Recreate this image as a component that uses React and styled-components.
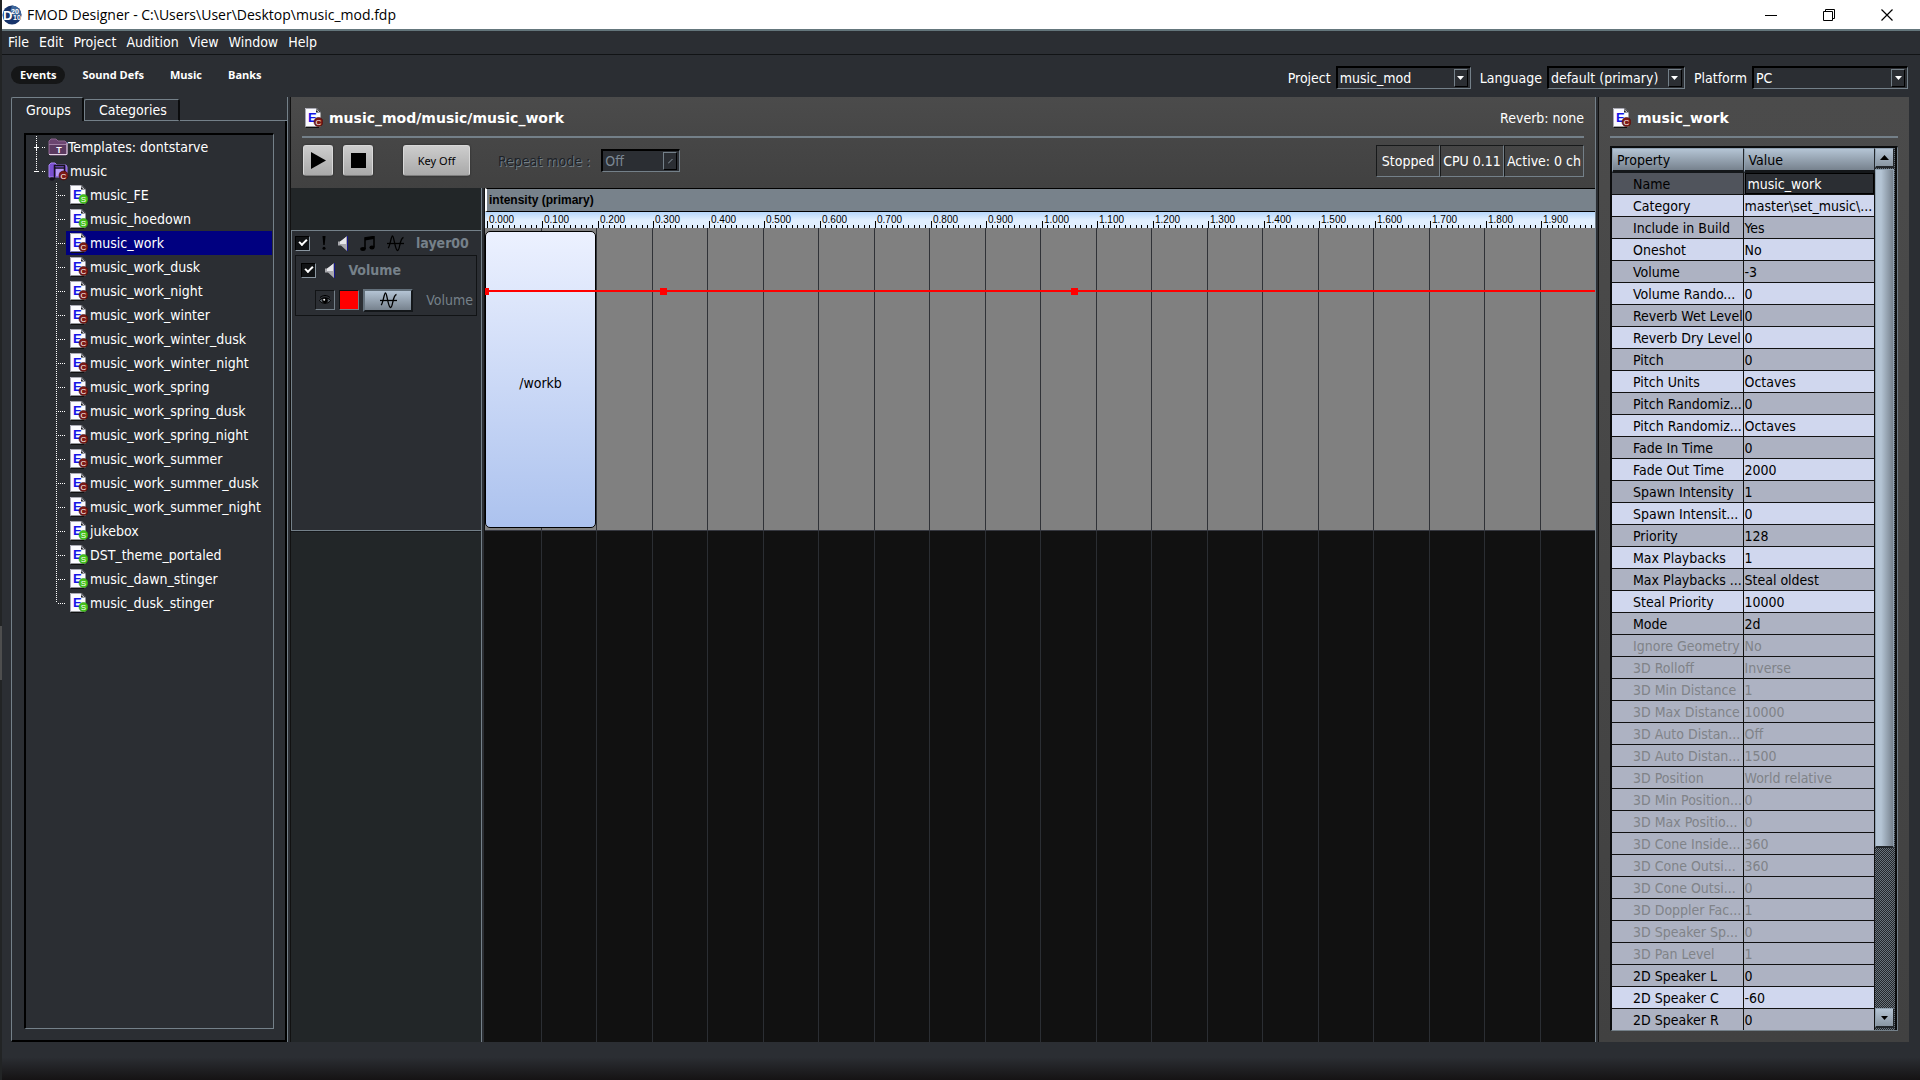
import React from "react";
import styled, { createGlobalStyle, css } from "styled-components";

const ui = `"DejaVu Sans Condensed", "DejaVu Sans", "Noto Sans", sans-serif`;

const Global = createGlobalStyle`
  *, *::before, *::after { box-sizing: border-box; }
  html, body, #root { height: 100%; }
  body { margin: 0; overflow: hidden; background: #2b2e33; color: #fff; font: 14px/20px ${ui}; }
  button, input, select { font: inherit; color: inherit; margin: 0; }
  svg { display: block; flex: none; }
`;

const Screen = styled.div`
  height: 100vh;
  display: flex;
`;
const DesktopEdge = styled.div`
  flex: none;
  width: 2px;
  background: linear-gradient(#222425 58%, #4e4e4e 58%, #4e4e4e 63%, #222425 63%);
`;
const Window = styled.div`
  flex: 1;
  min-width: 0;
  display: flex;
  flex-direction: column;
  background: #2b2e33;
`;

/* title bar */
const TitleBar = styled.header`
  flex: none;
  height: 31px;
  display: flex;
  align-items: center;
  padding-right: 4px;
  background: #fff;
  color: #000;
  border-bottom: 2px solid #64767c;
`;
const Title = styled.h1`
  flex: 1;
  margin: 0 0 0 5px;
  font: 400 14px/20px "Open Sans", "Noto Sans", sans-serif;
`;
const WindowButtons = styled.div`
  display: flex;
`;
const WindowButton = styled.button`
  width: 58px;
  height: 28px;
  display: flex;
  align-items: center;
  justify-content: center;
  border: 0;
  padding: 0;
  background: none;
`;

/* menus and tool bar */
const MenuBar = styled.nav`
  flex: none;
  height: 24px;
  display: flex;
  align-items: center;
  gap: 10px;
  padding: 0 6px 2px;
  border-bottom: 1px solid #111315;
`;
const PlainButton = styled.button`
  border: 0;
  padding: 0;
  background: none;
  line-height: 20px;
`;
const ToolBar = styled.div`
  flex: none;
  height: 42px;
  display: flex;
  justify-content: space-between;
  padding: 11px 12px 0 9px;
`;
const Modes = styled.nav`
  display: flex;
  align-items: flex-start;
  gap: 8px;
`;
const Mode = styled.button`
  height: 18px;
  margin: 0;
  padding: 0 9px;
  border: 0;
  border-radius: 9px;
  background: ${(p) => (p.$on ? "#151617" : "transparent")};
  font: 700 11px/16px "Open Sans", "Noto Sans", sans-serif;
`;
const Pickers = styled.div`
  display: flex;
  align-items: flex-start;
  gap: 9px;
`;
const Picker = styled.label`
  display: flex;
  align-items: center;
  gap: 5px;
  color: ${(p) => (p.$off ? "#1d2227" : "#fff")};
  ${(p) => p.$off && css`
    gap: 11px;
    text-shadow: 1px 1px 0 #74808a;
  `}
`;
const SelectBox = styled.span`
  position: relative;
  display: flex;
  width: ${(p) => p.$w}px;
  height: 23px;
  border: 2px solid #000;
  border-right: 1px solid #748089;
  border-bottom: 1px solid #748089;
`;
const Select = styled.select`
  appearance: none;
  flex: 1;
  width: 100%;
  padding: 0 20px 0 2px;
  border: 0;
  background: #2b2e33;
  color: ${(p) => (p.disabled ? "#7c8893" : "#fff")};
  opacity: 1;
`;
const SelectArrow = styled.span`
  position: absolute;
  top: 1px;
  right: 2px;
  width: 14px;
  height: 18px;
  display: flex;
  align-items: center;
  justify-content: center;
  border: 1px solid #748089;
  border-right-color: #000;
  border-bottom-color: #000;
  background: #2b2e33;
  pointer-events: none;
`;

/* main area */
const Main = styled.main`
  flex: 1;
  min-height: 0;
  display: flex;
  padding: 0 11px 0 9px;
`;
const Footer = styled.footer`
  flex: none;
  height: 38px;
  background: linear-gradient(#2b2e33 40%, #151314);
`;
const Splitter = styled.div`
  flex: none;
  width: 4px;
  background: #2b2e33;
  border-left: 1px solid #748089;
  border-right: 1px solid #111;
`;

const Sidebar = styled.section`
  flex: none;
  width: 276px;
  display: flex;
  flex-direction: column;
`;
const Tabs = styled.div`
  display: flex;
  align-items: flex-end;
  height: 24px;
`;
const Tab = styled.button`
  height: ${(p) => (p.$on ? 24 : 22)}px;
  padding: 0 11px 0 14px;
  border: 1px solid #748089;
  border-right: 2px solid #0b0c0d;
  border-bottom: ${(p) => (p.$on ? "0" : "1px solid #748089")};
  border-radius: 2px 2px 0 0;
  background: #2b2e33;
  line-height: 20px;
`;
const TabsRest = styled.div`
  flex: 1;
  border-bottom: 1px solid #748089;
`;
const TabPanel = styled.div`
  flex: 1;
  min-height: 0;
  display: flex;
  padding: 12px 11px 11px 12px;
  border: 1px solid #748089;
  border-top: 0;
  border-right: 2px solid #000;
  border-bottom: 2px solid #000;
`;
const Tree = styled.ul`
  flex: 1;
  margin: 0;
  padding: 0 1px 0 0;
  list-style: none;
  border: 2px solid #000;
  border-right: 1px solid #748089;
  border-bottom: 1px solid #748089;
`;
const TreeItem = styled.li`
  height: 24px;
  display: flex;
`;
const TreeLines = styled.svg`
  width: ${(p) => p.$w}px;
  height: 24px;
`;
const TreeButton = styled.button`
  flex: 1;
  display: flex;
  align-items: center;
  gap: ${(p) => p.$gap}px;
  padding: 0 0 0 ${(p) => p.$pad}px;
  border: 0;
  background: ${(p) => (p.$on ? "#000080" : "none")};
  line-height: 20px;
  white-space: nowrap;
`;

const Editor = styled.section`
  flex: 1;
  min-width: 0;
  display: flex;
  flex-direction: column;
  background: #222628;
`;
const EditorHead = styled.div`
  flex: none;
  height: 91px;
  padding: 0 11px;
  background: linear-gradient(#4b4b4b, #414141);
`;
const TitleLine = styled.div`
  height: 41px;
  display: flex;
  align-items: center;
  gap: 6px;
  padding: 3px 0 0 3px;
  border-bottom: 2px solid #0d0e0f;
  border-image: linear-gradient(#0d0e0f 50%, #748089 50%) 0 0 2 0;
`;
const PanelTitle = styled.h2`
  flex: 1;
  margin: 0;
  font: 700 14px/20px "DejaVu Sans", sans-serif;
`;
const Transport = styled.div`
  display: flex;
  align-items: flex-start;
  padding: 7px 0 0 1px;
`;
const PushButton = styled.button`
  width: ${(p) => p.$w}px;
  height: 31px;
  display: flex;
  align-items: center;
  justify-content: center;
  margin-right: ${(p) => p.$after}px;
  border: 1px solid #d8d8d8;
  border-bottom-color: #7d7d7d;
  border-radius: 3px;
  padding: 0;
  background: linear-gradient(#cdcdcd, #a9a9a9);
  box-shadow: 0 0 2px #222;
  color: #000;
  font: 11px/16px "Noto Sans", sans-serif;
`;
const RepeatSlot = styled.div`
  flex: 1;
  padding-top: 4px;
`;
const Status = styled.div`
  display: flex;
  height: 32px;
`;
const StatusCell = styled.span`
  display: flex;
  align-items: center;
  justify-content: center;
  width: ${(p) => p.$w}px;
  white-space: nowrap;
  border: 1px solid #17191a;
  border-right-color: #748089;
  border-bottom-color: #748089;
`;

const Arrange = styled.div`
  flex: 1;
  min-height: 0;
  display: flex;
`;
const LayerColumn = styled.div`
  flex: none;
  width: 190px;
  padding-top: 42px;
`;
const Layer = styled.div`
  height: 301px;
  padding: 0 4px 0 3px;
  background: #2b2e33;
  border: 1px solid #748089;
  border-right: 0;
  box-shadow: 0 1px 0 #15171a;
`;
const LayerHead = styled.div`
  height: 24px;
  display: flex;
  align-items: center;
  gap: 12px;
`;
const LayerName = styled.strong`
  color: #76818a;
`;
const Check = styled.input`
  appearance: none;
  flex: none;
  width: 15px;
  height: 15px;
  background: #101214;
  border: 1px solid #000;
  border-right-color: #8a96a0;
  border-bottom-color: #8a96a0;
  display: grid;
  place-items: center;
  &:checked::before {
    content: "";
    width: 8px;
    height: 5px;
    margin-top: -3px;
    border-left: 2px solid #fff;
    border-bottom: 2px solid #fff;
    transform: rotate(-45deg);
  }
`;
const Effect = styled.div`
  height: 61px;
  border: 1px solid #111315;
  padding: 4px 3px 0 5px;
`;
const EffectRow = styled.div`
  display: flex;
  align-items: center;
  gap: ${(p) => p.$gap}px;
  height: ${(p) => p.$h}px;
  padding-left: ${(p) => p.$in}px;
`;
const SmallButton = styled.button`
  flex: none;
  width: 20px;
  height: 20px;
  padding: 0;
  display: grid;
  place-items: center;
  border: 1px solid #111315;
  border-right-color: #748089;
  border-bottom-color: #748089;
  background: ${(p) => p.$bg};
`;
const CurveButton = styled.button`
  flex: none;
  width: 50px;
  height: 23px;
  padding: 0;
  display: grid;
  place-items: center;
  border: 2px solid #64717c;
  border-right-color: #14171a;
  border-bottom-color: #14171a;
  background: linear-gradient(#b4c4d4, #77828e);
`;
const EffectValue = styled.span`
  flex: 1;
  text-align: right;
  color: #76818a;
`;

const Timeline = styled.div`
  flex: 1;
  min-width: 0;
  display: flex;
  flex-direction: column;
  background: #111;
  overflow: hidden;
`;
const ParamBar = styled.div`
  flex: none;
  height: 24px;
  padding: 0 2px;
  border-top: 1px solid #000;
  border-bottom: 1px solid #000;
  border-left: 2px solid #fff;
  background: #78828b;
  color: #000;
  font: 700 12px/22px "Liberation Sans", Arial, sans-serif;
`;
const RulerArt = styled.svg`
  width: 100%;
  height: 16px;
  background: linear-gradient(#b7d7fb, #e1effe 50%);
  text { font: 10px "Liberation Sans", Arial, sans-serif; fill: #000; }
`;
const Lane = styled.div`
  position: relative;
  flex: ${(p) => (p.$empty ? "1" : "none")};
  height: ${(p) => (p.$empty ? "auto" : "303px")};
  min-height: 0;
  background: ${(p) => (p.$empty ? "#111" : "#808080")};
  border-bottom: ${(p) => (p.$empty ? "0" : "1px solid #35373f")};
`;
const Overlay = styled.svg`
  position: absolute;
  inset: 0;
  width: 100%;
  height: 100%;
`;
const Clip = styled.button`
  position: absolute;
  left: 0;
  top: 3px;
  width: 111px;
  height: 297px;
  border: 1px solid #000;
  border-radius: 5px;
  background: linear-gradient(#ecf1ff, #acc2ee);
  color: #000;
  padding: 6px 0 0;
`;

/* property panel */
const Properties = styled.aside`
  flex: none;
  width: 310px;
  display: flex;
  flex-direction: column;
  padding: 0 11px 11px;
  background: linear-gradient(#4b4b4b, #414141);
`;
const Grid = styled.div`
  flex: 1;
  min-height: 0;
  display: flex;
  margin-top: 8px;
  border: 2px solid #0b0c0d;
  border-right-color: #748089;
  border-right-width: 1px;
  border-bottom: 1px solid #748089;
  background: #0b0c0d;
`;
const TableClip = styled.div`
  flex: 1;
  min-width: 0;
  overflow: hidden;
`;
const Table = styled.table`
  width: 100%;
  table-layout: fixed;
  border-collapse: separate;
  border-spacing: 0;
  color: #000;
`;
const Th = styled.th`
  width: ${(p) => p.$w || "auto"};
  height: 25px;
  padding: 0 4px;
  text-align: left;
  font-weight: 400;
  line-height: 20px;
  border: 1px solid #8fa0b0;
  border-right: 1px solid #23272b;
  border-bottom: 3px solid #14171a;
  background: linear-gradient(#b4c4d4, #77828e);
`;
const Cell = styled.td`
  height: 22px;
  padding: 0 0 0 ${(p) => (p.$label ? 21 : 1)}px;
  overflow: hidden;
  white-space: nowrap;
  text-align: left;
  font-weight: 400;
  line-height: 20px;
  border-right: 1px solid #111;
  border-bottom: 1px solid #111;
  color: ${(p) => (p.$off ? "#808388" : "#000")};
  background: ${(p) => (p.$tone === "sel" ? "#50545c" : p.$tone === "light" ? "#d0d7ee" : "#adb2c2")};
`;
const NameInput = styled.input`
  display: block;
  width: 100%;
  height: 21px;
  padding: 0 2px;
  border: 1px solid #000;
  outline: 0;
  background: #2b2e33;
  color: #fff;
`;
const ScrollTrack = styled.div`
  flex: none;
  width: 22px;
  display: flex;
  flex-direction: column;
  padding: 0 1px 2px 0;
  background: repeating-conic-gradient(#69737c 0 25%, #23272b 0 50%) 0 0 / 2px 2px;
  border-right: 2px solid #0b0c0d;
`;
const ScrollButton = styled.button`
  flex: none;
  height: 20px;
  padding: 0;
  display: grid;
  place-items: center;
  border: 1px solid #8fa0b0;
  border-right-color: #23272b;
  border-bottom: 2px solid #23272b;
  background: linear-gradient(#b4c4d4, #8a96a2);
`;
const Thumb = styled.div`
  flex: 679;
  margin-top: 1px;
  border: 1px solid #8fa0b0;
  border-bottom: 2px solid #23272b;
  background: linear-gradient(90deg, #b4c4d4 30%, #77828e);
`;
const TrackRest = styled.div`
  flex: 161;
`;

/* drawings */
const AppIcon = () => (
  <svg width="20" height="20" viewBox="0 0 20 20">
    <circle cx="10" cy="10" r="9.5" fill="#17346b" />
    <path d="M10 .6a9.4 9.4 0 0 1 9.4 9.4L13 12 8 7z" fill="#3d679c" />
    <text x="1" y="15" fontFamily="Liberation Sans" fontWeight="700" fontSize="13" fill="#fff">D</text>
    <text x="9" y="9" fontFamily="Liberation Sans" fontWeight="700" fontSize="7" fill="#fff">20</text>
    <text x="11" y="15" fontFamily="Liberation Sans" fontWeight="700" fontSize="7" fill="#fff">10</text>
  </svg>
);
const Badge = ({ kind, x, y }) => (
  <g>
    <circle cx={x} cy={y} r="4.5" fill={kind === "C" ? "#7d1a16" : "#45c21b"} stroke={kind === "C" ? "#3c0b0a" : "#2a9a10"} strokeWidth=".6" />
    <text x={x} y={y + 3} textAnchor="middle" fontFamily="Liberation Sans" fontSize="8" fill="#fff">{kind}</text>
  </g>
);
const EventIcon = ({ kind }) => (
  <svg width="18" height="20" viewBox="0 0 18 20">
    <path d="M1 19.500h13" fill="none" stroke="#111" />
    <path d="M0 0h11.500l4 4v14.500H0z" fill="#fbfbff" />
    <path d="M.5 18.500V.5H11" fill="none" stroke="#a9a9b4" />
    <path d="M11 0v4.500h4.500V4z" fill="#1d1f24" />
    <path d="M11 1.500l3.500 3" stroke="#d9d9e0" />
    <text x="3" y="14" fontFamily="Liberation Sans" fontWeight="700" fontSize="13" fill="#1414e6">E</text>
    <Badge kind={kind} x={13.5} y={14} />
  </svg>
);
const TemplateIcon = () => (
  <svg width="20" height="18" viewBox="0 0 20 18">
    <path d="M1 3l2-2h5l2 2h7l2 2v11l-1 1H2l-1-1z" fill="#6b4570" stroke="#8a648e" />
    <path d="M1 6h17v1H1z" fill="#a07fa3" />
    <path d="M2 7h16v9H2z" fill="#5b3a60" />
    <path d="M1 16.500h18V5" fill="none" stroke="#e3d3e4" />
    <text x="11" y="15" textAnchor="middle" fontFamily="Liberation Sans" fontWeight="700" fontSize="9" fill="#fff">T</text>
  </svg>
);
const GroupIcon = () => (
  <svg width="21" height="19" viewBox="0 0 21 19">
    <path d="M1 3l2-2h4l2 2h9l1 2v10H1z" fill="#7a4fd0" stroke="#a685ef" />
    <path d="M8 5h9v9H8z" fill="#b99bf5" />
    <path d="M6.500 17V3.500h10V12M6.500 6h10" fill="none" stroke="#161020" strokeWidth="1.500" />
    <ellipse cx="4" cy="17" rx="2.600" ry="1.700" fill="#161020" />
    <Badge kind="C" x={15.5} y={13.5} />
  </svg>
);
const Down = ({ fill = "#fff" }) => (
  <svg width="7" height="4" viewBox="0 0 7 4"><path d="M0 0h7L3.500 4z" fill={fill} /></svg>
);
const Up = () => (
  <svg width="9" height="5" viewBox="0 0 9 5"><path d="M0 5h9L4.500 0z" fill="#000" /></svg>
);
const Speaker = () => (
  <svg width="10" height="15" viewBox="0 0 10 15">
    <path d="M0 5.500h3L9 0v15L3 9.500H0z" fill="#a9a9ae" />
    <path d="M2 5.500L8 1v7L2 8z" fill="#e6e6ea" />
    <path d="M9.500 0v15" stroke="#16168c" />
  </svg>
);
const Curve = () => (
  <svg width="17" height="17" viewBox="0 0 17 17" fill="none" stroke="#000" strokeWidth="1.300">
    <path d="M0 8.500h17" />
    <path d="M1 13C3 12 4 1 5.500 1S8 15 10.500 15.500 12.500 3 16.500 2.500" />
  </svg>
);
const Notes = () => (
  <svg width="15" height="15" viewBox="0 0 15 15">
    <path d="M5 13V2l9-1.500V11" fill="none" stroke="#000" strokeWidth="1.500" />
    <path d="M5 2l9-1.500v2.500L5 4.500z" />
    <ellipse cx="3" cy="13" rx="2.800" ry="1.900" /><ellipse cx="12" cy="11.500" rx="2.600" ry="1.900" />
  </svg>
);
const Bang = () => (
  <svg width="4" height="14" viewBox="0 0 4 14"><path d="M.5 0h3L2.700 9H1.300z" /><circle cx="2" cy="12.300" r="1.500" /></svg>
);
const Eye = () => (
  <svg width="12" height="12" viewBox="0 0 12 12">
    <path d="M1 3.500C4 .8 8 .8 11 3.500" fill="none" stroke="#000" />
    <path d="M.5 6.500C3 3 9 3 11.500 6.500 9 10.300 3 10.300 .5 6.500z" fill="#5d646b" stroke="#000" />
    <circle cx="6" cy="6.500" r="2.800" /><circle cx="5.200" cy="5.700" r="1" fill="#fff" />
  </svg>
);

/* data */
const events = [
  ["music_FE", "S"], ["music_hoedown", "S"], ["music_work", "C"], ["music_work_dusk", "C"],
  ["music_work_night", "C"], ["music_work_winter", "C"], ["music_work_winter_dusk", "C"],
  ["music_work_winter_night", "C"], ["music_work_spring", "C"], ["music_work_spring_dusk", "C"],
  ["music_work_spring_night", "C"], ["music_work_summer", "C"], ["music_work_summer_dusk", "C"],
  ["music_work_summer_night", "C"], ["jukebox", "S"], ["DST_theme_portaled", "S"],
  ["music_dawn_stinger", "S"], ["music_dusk_stinger", "S"],
];
const props = [
  ["Category", "master\\set_music\\..."], ["Include in Build", "Yes"], ["Oneshot", "No"], ["Volume", "-3"],
  ["Volume Rando...", "0"], ["Reverb Wet Level", "0"], ["Reverb Dry Level", "0"], ["Pitch", "0"],
  ["Pitch Units", "Octaves"], ["Pitch Randomiz...", "0"], ["Pitch Randomiz...", "Octaves"],
  ["Fade In Time", "0"], ["Fade Out Time", "2000"], ["Spawn Intensity", "1"], ["Spawn Intensit...", "0"],
  ["Priority", "128"], ["Max Playbacks", "1"], ["Max Playbacks ...", "Steal oldest"],
  ["Steal Priority", "10000"], ["Mode", "2d"],
  ["Ignore Geometry", "No", 1], ["3D Rolloff", "Inverse", 1], ["3D Min Distance", "1", 1],
  ["3D Max Distance", "10000", 1], ["3D Auto Distan...", "Off", 1], ["3D Auto Distan...", "1500", 1],
  ["3D Position", "World relative", 1], ["3D Min Position...", "0", 1], ["3D Max Positio...", "0", 1],
  ["3D Cone Inside...", "360", 1], ["3D Cone Outsi...", "360", 1], ["3D Cone Outsi...", "0", 1],
  ["3D Doppler Fac...", "1", 1], ["3D Speaker Sp...", "0", 1], ["3D Pan Level", "1", 1],
  ["2D Speaker L", "0"], ["2D Speaker C", "-60"], ["2D Speaker R", "0"],
];

const PITCH = 55.5;
const majors = Array.from({ length: 20 }, (_, i) => i);
const minors = Array.from({ length: 200 }, (_, i) => i);

const GridLines = ({ color }) => (
  <Overlay>
    {majors.slice(1).map((i) => {
      const x = Math.ceil(i * PITCH) + 0.5;
      return <line key={i} x1={x} x2={x} y1="0" y2="100%" stroke={color} />;
    })}
  </Overlay>
);

const Ruler = () => (
  <RulerArt>
    {minors.map((i) => {
      const x = Math.floor(2 + (i * PITCH) / 10) + 0.5;
      return <line key={i} x1={x} x2={x} y1={i % 10 ? 13 : 9} y2="16" stroke="#000" />;
    })}
    {majors.map((i) => (
      <text key={i} x={Math.floor(4 + i * PITCH)} y="11">{(i / 10).toFixed(3)}</text>
    ))}
  </RulerArt>
);

function Dropdown({ label, value, width, disabled }) {
  return (
    <Picker $off={disabled}>
      {label}
      <SelectBox $w={width}>
        <Select disabled={disabled} defaultValue={value}><option>{value}</option></Select>
        <SelectArrow>
          {disabled ? <svg width="5" height="5"><path d="M0 4.500L4.500 0" stroke="#8a96a0" /></svg> : <Down />}
        </SelectArrow>
      </SelectBox>
    </Picker>
  );
}

const RootLines = ({ open, first }) => (
  <TreeLines $w={22} stroke="#fff" strokeDasharray="1 1">
    <path d={first ? "M10.500 1v23" : "M10.500 0v12"} />
    <path d="M16 12.500h4" />
    <path d="M8 12.500h5" strokeDasharray="none" />
    {!open && <path d="M10.500 10v5" strokeDasharray="none" />}
  </TreeLines>
);

export default function App() {
  return (
    <>
      <Global />
      <Screen>
        <DesktopEdge />
        <Window>
          <TitleBar>
            <AppIcon />
            <Title>FMOD Designer - C:\Users\User\Desktop\music_mod.fdp</Title>
            <WindowButtons>
              <WindowButton aria-label="Minimize"><svg width="12" height="12"><path d="M0 6.500h12" stroke="#000" /></svg></WindowButton>
              <WindowButton aria-label="Restore">
                <svg width="12" height="12" fill="none" stroke="#000"><path d="M.5 2.500h9v9h-9zM2.500 2.500v-2h9v9h-2" /></svg>
              </WindowButton>
              <WindowButton aria-label="Close"><svg width="12" height="12"><path d="M.5.5l11 11M11.500.5l-11 11" stroke="#000" strokeWidth="1.200" /></svg></WindowButton>
            </WindowButtons>
          </TitleBar>

          <MenuBar>
            {["File", "Edit", "Project", "Audition", "View", "Window", "Help"].map((m) => (
              <PlainButton key={m}>{m}</PlainButton>
            ))}
          </MenuBar>

          <ToolBar>
            <Modes>
              {["Events", "Sound Defs", "Music", "Banks"].map((m, i) => <Mode key={m} $on={i === 0}>{m}</Mode>)}
            </Modes>
            <Pickers>
              <Dropdown label="Project" value="music_mod" width={135} />
              <Dropdown label="Language" value="default (primary)" width={138} />
              <Dropdown label="Platform" value="PC" width={156} />
            </Pickers>
          </ToolBar>

          <Main>
            <Sidebar>
              <Tabs>
                <Tab $on>Groups</Tab>
                <Tab>Categories</Tab>
                <TabsRest />
              </Tabs>
              <TabPanel>
                <Tree>
                  <TreeItem>
                    <RootLines first />
                    <TreeButton $pad={0} $gap={0}><TemplateIcon />Templates: dontstarve</TreeButton>
                  </TreeItem>
                  <TreeItem>
                    <RootLines open />
                    <TreeButton $pad={0} $gap={1}><GroupIcon />music</TreeButton>
                  </TreeItem>
                  {events.map(([name, kind], i) => (
                    <TreeItem key={name}>
                      <TreeLines $w={40} stroke="#fff" strokeDasharray="1 1">
                        <path d={i === events.length - 1 ? "M30.500 0v12" : "M30.500 0v24"} />
                        <path d="M32 12.500h8" />
                      </TreeLines>
                      <TreeButton $pad={4} $gap={2} $on={name === "music_work"}><EventIcon kind={kind} />{name}</TreeButton>
                    </TreeItem>
                  ))}
                </Tree>
              </TabPanel>
            </Sidebar>
            <Splitter />

            <Editor>
              <EditorHead>
                <TitleLine>
                  <EventIcon kind="C" />
                  <PanelTitle>music_mod/music/music_work</PanelTitle>
                  <span>Reverb: none</span>
                </TitleLine>
                <Transport>
                  <PushButton $w={30} $after={10} aria-label="Play"><svg width="15" height="17"><path d="M0 0l15 8.500L0 17z" /></svg></PushButton>
                  <PushButton $w={30} $after={30} aria-label="Stop"><svg width="15" height="15"><path d="M0 0h15v15H0z" /></svg></PushButton>
                  <PushButton $w={67} $after={28}>Key Off</PushButton>
                  <RepeatSlot><Dropdown label="Repeat mode :" value="Off" width={79} disabled /></RepeatSlot>
                  <Status>
                    <StatusCell $w={64}>Stopped</StatusCell>
                    <StatusCell $w={64}>CPU 0.11</StatusCell>
                    <StatusCell $w={80}>Active: 0 ch</StatusCell>
                  </Status>
                </Transport>
              </EditorHead>
              <Arrange>
                <LayerColumn>
                  <Layer>
                    <LayerHead>
                      <Check type="checkbox" defaultChecked aria-label="layer00" />
                      <Bang /><Speaker /><Notes /><Curve />
                      <LayerName>layer00</LayerName>
                    </LayerHead>
                    <Effect>
                      <EffectRow $gap={9} $h={20} $in={0}>
                        <Check type="checkbox" defaultChecked aria-label="Volume effect" />
                        <Speaker />
                        <LayerName>&nbsp;Volume</LayerName>
                      </EffectRow>
                      <EffectRow $gap={4} $h={40} $in={14}>
                        <SmallButton $bg="#2b2e33" aria-label="Show curve"><Eye /></SmallButton>
                        <SmallButton $bg="#f00" aria-label="Curve colour" />
                        <CurveButton aria-label="Edit curve"><Curve /></CurveButton>
                        <EffectValue>Volume</EffectValue>
                      </EffectRow>
                    </Effect>
                  </Layer>
                </LayerColumn>
                <Splitter />
                <Timeline>
                  <ParamBar>intensity (primary)</ParamBar>
                  <Ruler />
                  <Lane>
                    <GridLines color="#303237" />
                    <Clip>/workb</Clip>
                    <Overlay pointerEvents="none">
                      <rect x="0" y="62" width="100%" height="2" fill="#f00" />
                      <path d="M0 60h4v7H0zM175 60h7v7h-7zM586 60h7v7h-7z" fill="#f00" />
                    </Overlay>
                  </Lane>
                  <Lane $empty><GridLines color="#2b2e33" /></Lane>
                </Timeline>
              </Arrange>
            </Editor>
            <Splitter />

            <Properties>
              <TitleLine>
                <EventIcon kind="C" />
                <PanelTitle>music_work</PanelTitle>
              </TitleLine>
              <Grid>
                <TableClip>
                  <Table>
                    <thead><tr><Th $w="50%">Property</Th><Th>Value</Th></tr></thead>
                    <tbody>
                      <tr>
                        <Cell as="th" scope="row" $label $tone="sel"><label htmlFor="event-name">Name</label></Cell>
                        <Cell $tone="sel"><NameInput id="event-name" defaultValue="music_work" /></Cell>
                      </tr>
                      {props.map(([k, v, off], i) => {
                        const tone = i % 2 === 0 && !off ? "light" : "dim";
                        return (
                          <tr key={i}>
                            <Cell as="th" scope="row" $label $off={off} $tone={tone}>{k}</Cell>
                            <Cell $off={off} $tone={tone}>{v}</Cell>
                          </tr>
                        );
                      })}
                    </tbody>
                  </Table>
                </TableClip>
                <ScrollTrack>
                  <ScrollButton aria-label="Scroll up"><Up /></ScrollButton>
                  <Thumb />
                  <TrackRest />
                  <ScrollButton aria-label="Scroll down"><Down fill="#000" /></ScrollButton>
                </ScrollTrack>
              </Grid>
            </Properties>
          </Main>
          <Footer />
        </Window>
      </Screen>
    </>
  );
}
